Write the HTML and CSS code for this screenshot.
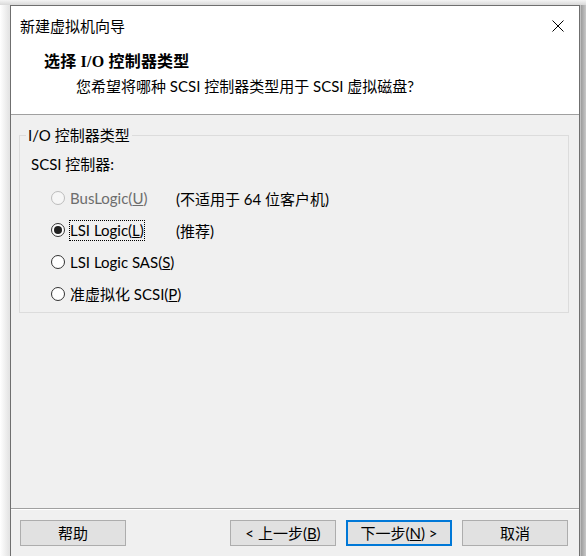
FILE: index.html
```html
<!DOCTYPE html>
<html lang="zh-CN">
<head>
<meta charset="utf-8">
<title>新建虚拟机向导</title>
<link rel="stylesheet" href="styles.css">
</head>
<body>
<div class="desk">
  <div class="window">
    <div class="titlebar">
      <span class="title">新建虚拟机向导</span>
      <svg class="close" width="12" height="12" viewBox="0 0 12 12"><path d="M0.5 0.5 L11.5 11.5 M11.5 0.5 L0.5 11.5" stroke="#000" stroke-width="1" fill="none"/></svg>
    </div>
    <div class="header">
      <div class="h-title">选择 I/O 控制器类型</div>
      <div class="h-sub">您希望将哪种 SCSI 控制器类型用于 SCSI 虚拟磁盘?</div>
    </div>
    <div class="content">
      <fieldset class="group">
        <legend>I/O 控制器类型</legend>
        <div class="sub-label">SCSI 控制器:</div>
        <div class="options">
          <div class="opt disabled">
            <span class="radio"></span>
            <span class="lbl"><span class="txt">BusLogic(<u>U</u>)</span></span>
            <span class="note">(不适用于 64 位客户机)</span>
          </div>
          <div class="opt">
            <span class="radio checked"></span>
            <span class="lbl"><span class="txt focus">LSI Logic(<u>L</u>)</span></span>
            <span class="note">(推荐)</span>
          </div>
          <div class="opt">
            <span class="radio"></span>
            <span class="lbl"><span class="txt">LSI Logic SAS(<u>S</u>)</span></span>
          </div>
          <div class="opt">
            <span class="radio"></span>
            <span class="lbl"><span class="txt">准虚拟化 SCSI(<u>P</u>)</span></span>
          </div>
        </div>
      </fieldset>
    </div>
    <div class="footer">
      <button class="btn">帮助</button>
      <div class="spacer"></div>
      <button class="btn">&lt; 上一步(<u>B</u>)</button>
      <button class="btn default">下一步(<u>N</u>) &gt;</button>
      <button class="btn">取消</button>
    </div>
  </div>
</div>
</body>
</html>
```
FILE: styles.css
```css
html, body {
  margin: 0;
  padding: 0;
}
body {
  width: 586px;
  height: 556px;
  overflow: hidden;
  background: linear-gradient(90deg, #ffffff 0px, #e4e4e4 9px, #e4e4e4 580px, #9c9c9c 581px, #c8c8c8 586px);
  font-family: "Segoe UI", "Lato", "Noto Sans CJK SC", sans-serif;
  font-size: 15px;
  color: #000;
}
.desk {
  padding: 5px 0 0 10px;
  background: linear-gradient(180deg, #f4f4f4 0px, #d9d9d9 5px, transparent 5px);
}
.window {
  width: 568px;
  height: 550px;
  border: 1px solid #6f6f6f;
  border-bottom: none;
  background: #f0f0f0;
  display: flex;
  flex-direction: column;
}
.titlebar {
  height: 39px;
  background: #fff;
  display: flex;
  align-items: center;
  justify-content: space-between;
  padding: 0 15px 0 9px;
  flex: none;
}
.title {
  font-size: 15px;
}
.close {
  display: block;
}
.header {
  height: 70px;
  background: #fff;
  border-bottom: 1px solid #a0a0a0;
  padding: 7px 0 0 33px;
  box-sizing: border-box;
  flex: none;
}
.h-title {
  font-family: "Liberation Serif", "Noto Sans CJK SC", serif;
  font-weight: bold;
  font-size: 16px;
  line-height: 20px;
  letter-spacing: 0.2px;
}
.h-sub {
  line-height: 20px;
  margin-top: 4px;
  padding-left: 32px;
}
.content {
  flex: 1;
  padding: 10px 10px 0 8px;
  border-bottom: 1px solid #a0a0a0;
}
.group {
  margin: 0;
  padding: 0 0 8px 0;
  border: 1px solid #dcdcdc;
  min-width: 0;
}
.group legend {
  margin-left: 6px;
  padding: 0 2px 0 2px;
  line-height: 20px;
}
.sub-label {
  line-height: 20px;
  margin: 9px 0 0 11px;
}
.options {
  display: flex;
  flex-direction: column;
  gap: 12px;
  margin: 14px 0 0 31px;
}
.opt {
  display: flex;
  align-items: center;
  height: 20px;
}
.radio {
  width: 14px;
  height: 14px;
  border: 1px solid #333;
  border-radius: 50%;
  background: #fff;
  box-sizing: border-box;
  position: relative;
  flex: none;
}
.radio.checked::after {
  content: "";
  position: absolute;
  left: 2px;
  top: 2px;
  width: 8px;
  height: 8px;
  border-radius: 50%;
  background: #222;
}
.opt.disabled .radio {
  border-color: #bcbcbc;
  background: #f6f6f6;
}
.opt.disabled .lbl {
  color: #6d6d6d;
}
.lbl {
  margin-left: 5px;
  width: 106px;
  white-space: nowrap;
  flex: none;
}
.txt {
  display: inline-block;
  line-height: 19px;
}
.txt.focus {
  outline: 1px dotted #000;
  outline-offset: 0;
}
.opt .note {
  white-space: nowrap;
}
.footer {
  height: 47px;
  border-top: 1px solid #fff;
  display: flex;
  align-items: flex-start;
  padding: 10px 11px 0 9px;
  gap: 10px;
  box-sizing: border-box;
  flex: none;
}
.spacer {
  flex: 1;
}
.btn {
  width: 106px;
  height: 26px;
  margin: 0;
  padding: 0;
  border: 1px solid #adadad;
  background: #e1e1e1;
  font: inherit;
  font-size: 15px;
  color: #000;
  line-height: 22px;
}
.btn.default {
  border: 2px solid #0078d7;
}
```
